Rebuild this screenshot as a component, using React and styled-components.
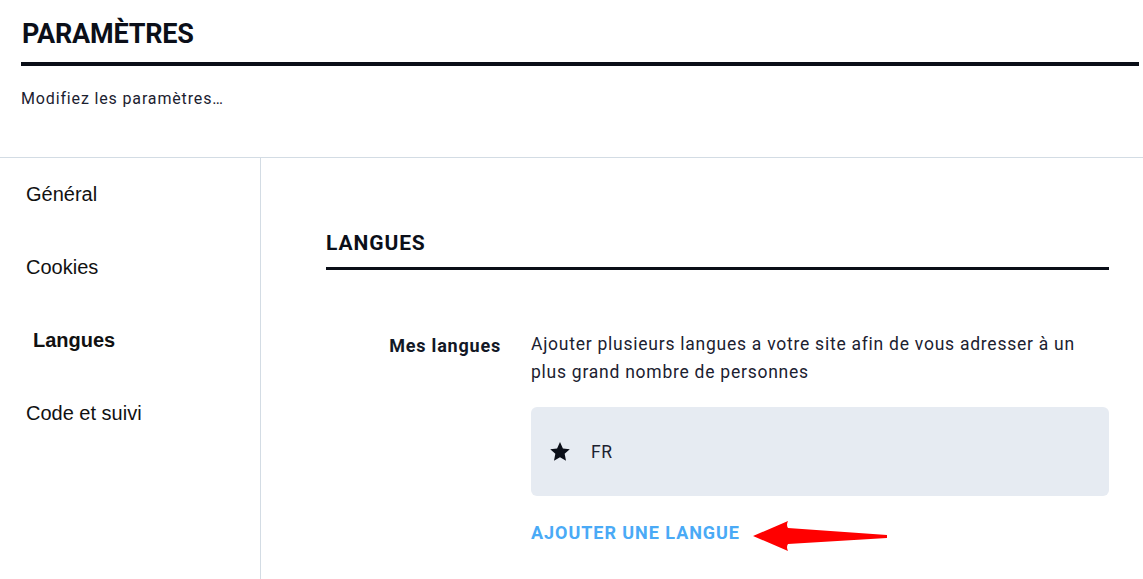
import React from 'react';
import styled, { createGlobalStyle } from 'styled-components';

const GlobalStyle = createGlobalStyle`
  body {
    margin: 0;
    background: #fff;
    color: #121826;
    font-family: Roboto, "Liberation Sans", sans-serif;
  }
`;

const Page = styled.div`
  width: 1143px;
  min-height: 579px;
  display: flex;
  flex-direction: column;
`;

const Header = styled.header`
  padding: 17px 4px 46px 21px;
  border-bottom: 1px solid #d3dce4;
`;

const Title = styled.h1`
  margin: 0;
  padding: 0 0 11px 1px;
  font-size: 27px;
  line-height: 34px;
  font-weight: 700;
  letter-spacing: -0.2px;
  color: #0b0f19;
  border-bottom: 4px solid #0a0e17;
`;

const Subtitle = styled.p`
  margin: 21px 0 0;
  font-size: 16px;
  line-height: 24px;
  letter-spacing: 0.85px;
  color: #1b2130;
`;

const Body = styled.div`
  flex: 1;
  display: grid;
  grid-template-columns: 261px 1fr;
  height: 421px;
`;

const Sidebar = styled.nav`
  border-right: 1px solid #d3dce4;
  display: flex;
  flex-direction: column;
`;

const NavItem = styled.div`
  height: 73px;
  display: flex;
  align-items: center;
  padding-left: ${(p) => (p.$active ? '33px' : '26px')};
  font-family: "Liberation Sans", Arial, sans-serif;
  font-size: 20px;
  font-weight: ${(p) => (p.$active ? 700 : 400)};
  color: #111;
`;

const Main = styled.main`
  padding: 71px 34px 0 65px;
`;

const SectionTitle = styled.h2`
  margin: 0;
  padding-bottom: 10px;
  font-size: 21px;
  line-height: 28px;
  font-weight: 700;
  letter-spacing: 0.9px;
  color: #0b0f19;
  border-bottom: 3px solid #0a0e17;
`;

const Row = styled.div`
  margin-top: 60px;
  display: grid;
  grid-template-columns: 175px 1fr;
  column-gap: 30px;
`;

const Label = styled.div`
  text-align: right;
  padding-top: 2px;
  font-size: 18px;
  line-height: 28px;
  font-weight: 700;
  letter-spacing: 0.8px;
  color: #121826;
`;

const Content = styled.div`
  display: flex;
  flex-direction: column;
`;

const Description = styled.p`
  margin: 0;
  font-size: 17.5px;
  line-height: 28px;
  letter-spacing: 0.75px;
  color: #1b2130;
`;

const LangBox = styled.div`
  margin-top: 21px;
  height: 89px;
  border-radius: 6px;
  background: #e6ebf2;
  display: flex;
  align-items: center;
  gap: 20px;
  padding: 0 18px;
`;

const LangCode = styled.span`
  font-size: 17.5px;
  letter-spacing: 0.6px;
  color: #1b2130;
`;

const AddRow = styled.div`
  margin-top: 25px;
  display: flex;
  align-items: flex-start;
`;

const AddLink = styled.a`
  font-size: 18px;
  line-height: 24px;
  font-weight: 700;
  color: #4aaaf6;
  text-decoration: none;
  cursor: pointer;
  letter-spacing: 0.95px;
`;

const Arrow = styled.svg`
  margin: -2px 0 0 13px;
  flex-shrink: 0;
`;

const Star = () => (
  <svg width="22" height="21" viewBox="0 0 24 23">
    <path
      d="M12 1.2l3.2 6.9 7.5.9-5.6 5.1 1.5 7.4L12 17.8l-6.6 3.7 1.5-7.4L1.3 9l7.5-.9z"
      fill="#0b0f19"
    />
  </svg>
);

const navItems = ['Général', 'Cookies', 'Langues', 'Code et suivi'];

export default function App() {
  return (
    <Page>
      <GlobalStyle />
      <Header>
        <Title>PARAMÈTRES</Title>
        <Subtitle>Modifiez les paramètres…</Subtitle>
      </Header>
      <Body>
        <Sidebar>
          {navItems.map((item) => (
            <NavItem key={item} $active={item === 'Langues'}>
              {item}
            </NavItem>
          ))}
        </Sidebar>
        <Main>
          <SectionTitle>LANGUES</SectionTitle>
          <Row>
            <Label>Mes langues</Label>
            <Content>
              <Description>
                Ajouter plusieurs langues a votre site afin de vous adresser à un
                <br />
                plus grand nombre de personnes
              </Description>
              <LangBox>
                <Star />
                <LangCode>FR</LangCode>
              </LangBox>
              <AddRow>
                <AddLink>AJOUTER UNE LANGUE</AddLink>
                <Arrow width="136" height="34" viewBox="0 0 136 34">
                  <path
                    d="M0 17 L35 2 Q33 6 35 9 L134 16 L134 19 L35 25 Q33 28 35 32 Z"
                    fill="#ff0000"
                  />
                </Arrow>
              </AddRow>
            </Content>
          </Row>
        </Main>
      </Body>
    </Page>
  );
}
